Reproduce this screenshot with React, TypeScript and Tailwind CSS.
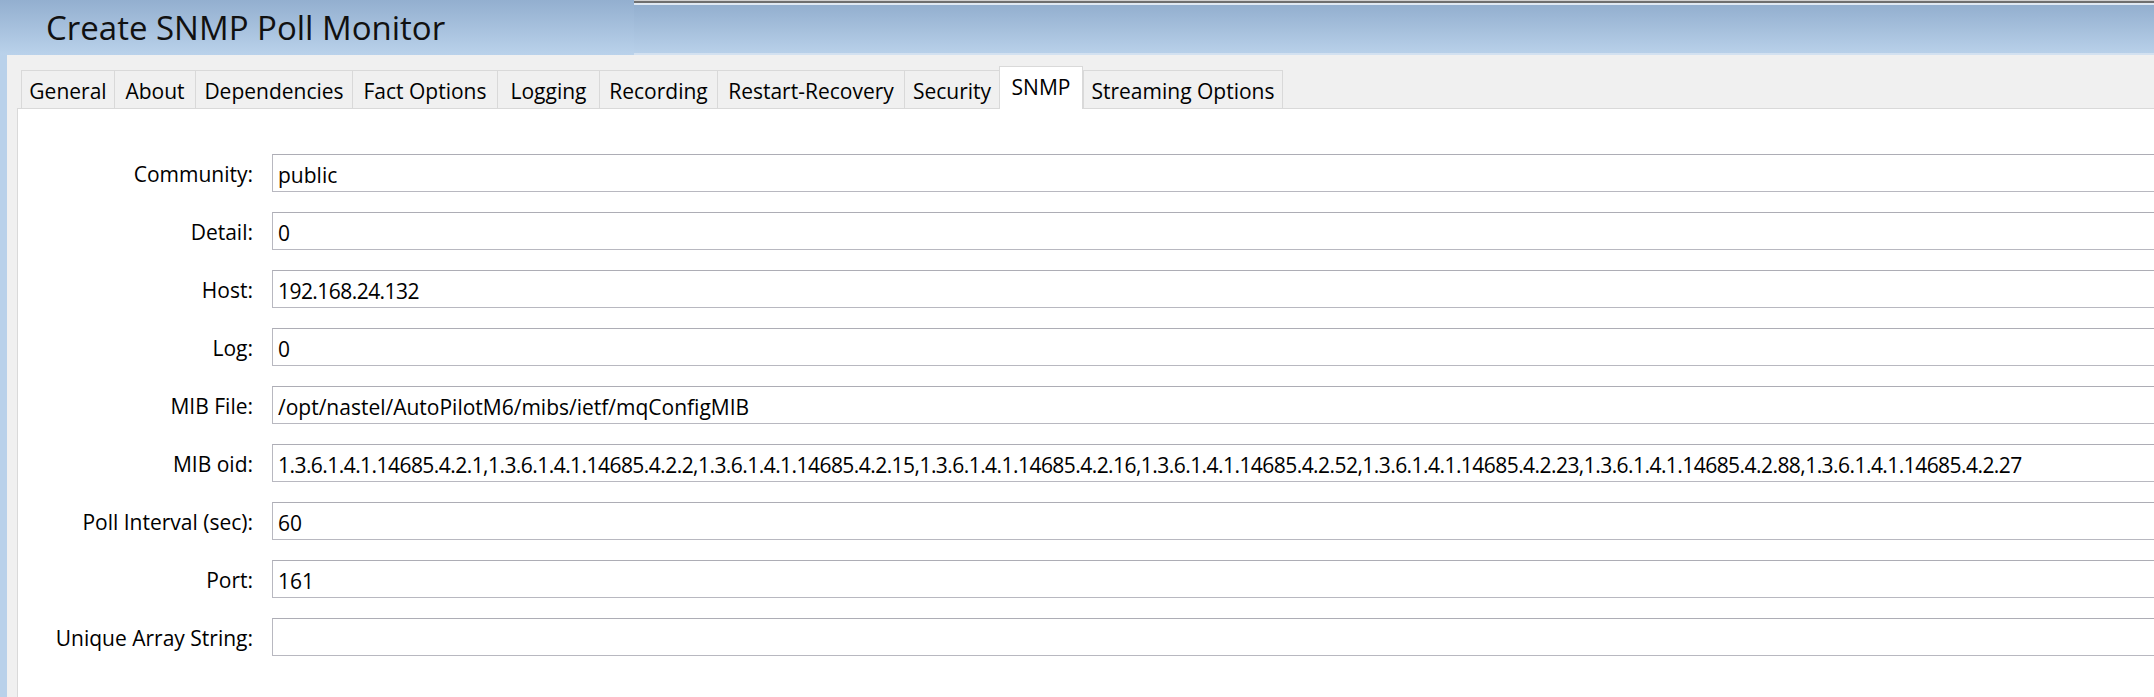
import React from 'react';

const tabs = [
  { name: 'General', w: 'w-[93px]' },
  { name: 'About', w: 'w-[81px]' },
  { name: 'Dependencies', w: 'w-[157px]' },
  { name: 'Fact Options', w: 'w-[145px]' },
  { name: 'Logging', w: 'w-[102px]' },
  { name: 'Recording', w: 'w-[118px]' },
  { name: 'Restart-Recovery', w: 'w-[187px]' },
  { name: 'Security', w: 'w-[95px]' },
  { name: 'SNMP', w: 'w-[84px]', active: true },
  { name: 'Streaming Options', w: 'w-[200px]' },
];

const fields = [
  { label: 'Community:', value: 'public' },
  { label: 'Detail:', value: '0' },
  { label: 'Host:', value: '192.168.24.132', tight: true },
  { label: 'Log:', value: '0' },
  { label: 'MIB File:', value: '/opt/nastel/AutoPilotM6/mibs/ietf/mqConfigMIB' },
  {
    label: 'MIB oid:',
    value:
      '1.3.6.1.4.1.14685.4.2.1,1.3.6.1.4.1.14685.4.2.2,1.3.6.1.4.1.14685.4.2.15,1.3.6.1.4.1.14685.4.2.16,1.3.6.1.4.1.14685.4.2.52,1.3.6.1.4.1.14685.4.2.23,1.3.6.1.4.1.14685.4.2.88,1.3.6.1.4.1.14685.4.2.27',
    tight: true,
  },
  { label: 'Poll Interval (sec):', value: '60' },
  { label: 'Port:', value: '161' },
  { label: 'Unique Array String:', value: '' },
];

export default function App() {
  return (
    <div className="w-[2154px] h-[697px] overflow-hidden bg-[#f0f0f0] font-['Open_Sans',sans-serif] text-black flex flex-col">
      {/* Title bar */}
      <div className="flex h-[55px] shrink-0">
        <div className="w-[634px] h-full bg-gradient-to-b from-[#93afcf] to-[#bad2eb] flex items-center pl-[46px]">
          <h1 className="text-[33px] text-[#111111]">Create SNMP Poll Monitor</h1>
        </div>
        <div className="flex-1 flex flex-col">
          <div className="h-[1px] bg-[#cfcfcf]"></div>
          <div className="h-[2px] bg-[#6f6f6f]"></div>
          <div className="h-[2px] bg-[#dfe8f2]"></div>
          <div className="flex-1 bg-gradient-to-b from-[#93afcf] to-[#b8d0e9]"></div>
          <div className="h-[2px] bg-[#d3e1f0]"></div>
        </div>
      </div>

      <div className="flex flex-1">
        {/* window frame */}
        <div className="w-[7px] bg-[#b9d1ea]"></div>

        <div className="flex-1 flex flex-col">
          {/* Tabs */}
          <div className="h-[53px] flex items-end pl-[14px] shrink-0">
            {tabs.map((t, i) => (
              <div
                key={t.name}
                className={
                  t.active
                    ? `${t.w} h-[43px] -mb-px relative z-10 bg-white border-l border-t border-r border-[#d9d9d9] flex items-center justify-center text-[21px] whitespace-nowrap`
                    : `${t.w} h-[38px] bg-[#f0f0f0] border-t border-l border-[#d9d9d9] ${i === tabs.length - 1 ? 'border-r' : ''} flex items-center justify-center pt-[4px] text-[21px] whitespace-nowrap`
                }
              >
                {t.name}
              </div>
            ))}
          </div>

          {/* Content panel */}
          <div className="flex-1 ml-[10px] bg-white border-l border-t border-[#d9d9d9] pt-[45px]">
            <div className="flex flex-col gap-[20px]">
              {fields.map((f) => (
                <div key={f.label} className="flex items-center h-[38px]">
                  <div className="w-[235px] shrink-0 text-right text-[21px] pt-[3px] whitespace-nowrap">
                    {f.label}
                  </div>
                  <input
                    readOnly
                    value={f.value}
                    className={`ml-[19px] flex-1 h-[38px] border border-r-0 border-[#b8b8c0] border-t-[#adadb5] bg-white pl-[5px] pt-[3px] text-[21px] outline-none font-['Open_Sans',sans-serif] text-black ${f.tight ? 'tracking-[-0.55px]' : ''}`}
                  />
                </div>
              ))}
            </div>
          </div>
        </div>
      </div>
    </div>
  );
}
